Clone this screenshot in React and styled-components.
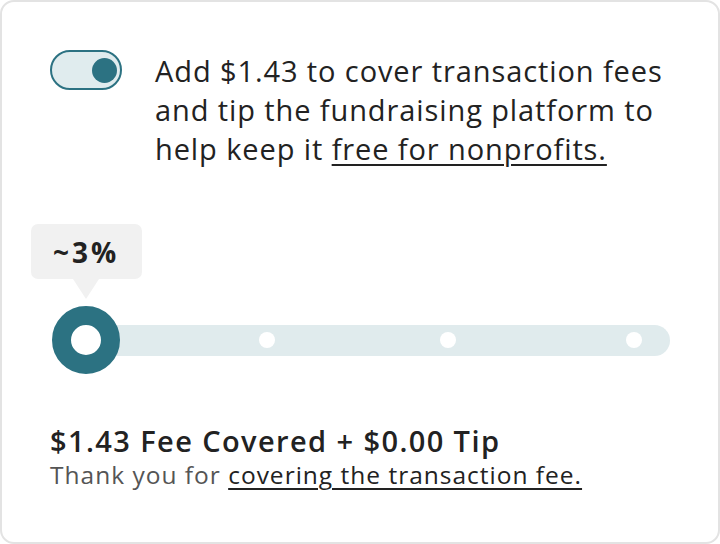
import React from "react";
import styled, { createGlobalStyle } from "styled-components";

const Global = createGlobalStyle`
  html, body { margin: 0; padding: 0; background: #ffffff; }
  * { box-sizing: border-box; }
  body { font-family: "Open Sans", "Noto Sans", sans-serif; color: #222222; }
`;

const TEAL = "#2c7282";

const Card = styled.div`
  width: 720px;
  height: 544px;
  border: 2px solid #e3e3e3;
  border-radius: 14px;
  background: #ffffff;
  padding: 48px 48px 0 48px;
  display: flex;
  flex-direction: column;
`;

const TopRow = styled.div`
  display: flex;
  align-items: flex-start;
  gap: 33px;
`;

const Toggle = styled.button`
  flex: none;
  width: 72px;
  height: 40px;
  border: 2px solid ${TEAL};
  border-radius: 20px;
  background: #e0ecee;
  padding: 0 3px;
  display: flex;
  align-items: center;
  justify-content: ${(p) => (p.$on ? "flex-end" : "flex-start")};
  cursor: pointer;
`;

const Knob = styled.span`
  width: 25px;
  height: 25px;
  border-radius: 50%;
  background: ${TEAL};
`;

const Lead = styled.p`
  margin: 1px 0 0 0;
  font-size: 29px;
  line-height: 39px;
  letter-spacing: 0.9px;
  color: #222222;
`;

const Link = styled.a`
  color: #222222;
  text-decoration: underline;
  text-underline-offset: 4px;
  text-decoration-thickness: 1.5px;
`;

const SliderArea = styled.div`
  margin-top: 56px;
  margin-left: 2px;
  width: 618px;
  display: flex;
  flex-direction: column;
`;

const Tip = styled.div`
  position: relative;
  width: 111px;
  height: 55px;
  border-radius: 7px;
  background: #f1f1f1;
  display: flex;
  align-items: center;
  justify-content: center;
  font-size: 28px;
  font-weight: 700;
  letter-spacing: 3px;
  color: #222222;
  margin-bottom: 27px;
  &::after {
    content: "";
    position: absolute;
    left: 50%;
    top: 100%;
    transform: translateX(-50%);
    border-left: 13px solid transparent;
    border-right: 13px solid transparent;
    border-top: 20px solid #f1f1f1;
  }
`;

const Slider = styled.div`
  position: relative;
  height: 68px;
`;

const Track = styled.div`
  position: absolute;
  left: 20px;
  right: 0;
  top: 19px;
  height: 31px;
  border-radius: 16px;
  background: #e0ebed;
`;

const Dot = styled.span`
  position: absolute;
  top: 26px;
  width: 16px;
  height: 16px;
  margin-left: -8px;
  border-radius: 50%;
  background: #ffffff;
`;

const Thumb = styled.span`
  position: absolute;
  top: 0;
  width: 68px;
  height: 68px;
  margin-left: -34px;
  border-radius: 50%;
  border: 19.5px solid ${TEAL};
  background: #ffffff;
`;

const Summary = styled.div`
  margin-top: 50px;
  display: flex;
  flex-direction: column;
`;

const Total = styled.div`
  font-size: 29px;
  line-height: 34px;
  font-weight: 600;
  letter-spacing: 1.4px;
  color: #222222;
`;

const Thanks = styled.div`
  font-size: 24.5px;
  line-height: 34px;
  letter-spacing: 1px;
  color: #555555;
`;

const stops = [34, 215, 396, 582];

export default function App() {
  const value = 0;
  return (
    <>
      <Global />
      <Card>
        <TopRow>
          <Toggle $on aria-label="Cover fees">
            <Knob />
          </Toggle>
          <Lead>
            Add $1.43 to cover transaction fees and tip the fundraising platform to help keep it{" "}
            <Link href="#">free for nonprofits.</Link>
          </Lead>
        </TopRow>
        <SliderArea>
          <Tip style={{ marginLeft: stops[value] - 55.5 }}>~3%</Tip>
          <Slider>
            <Track />
            {stops.map((x, i) => (i === value ? null : <Dot key={i} style={{ left: x }} />))}
            <Thumb style={{ left: stops[value] }} />
          </Slider>
        </SliderArea>
        <Summary>
          <Total>$1.43 Fee Covered + $0.00 Tip</Total>
          <Thanks>
            Thank you for <Link href="#">covering the transaction fee.</Link>
          </Thanks>
        </Summary>
      </Card>
    </>
  );
}
